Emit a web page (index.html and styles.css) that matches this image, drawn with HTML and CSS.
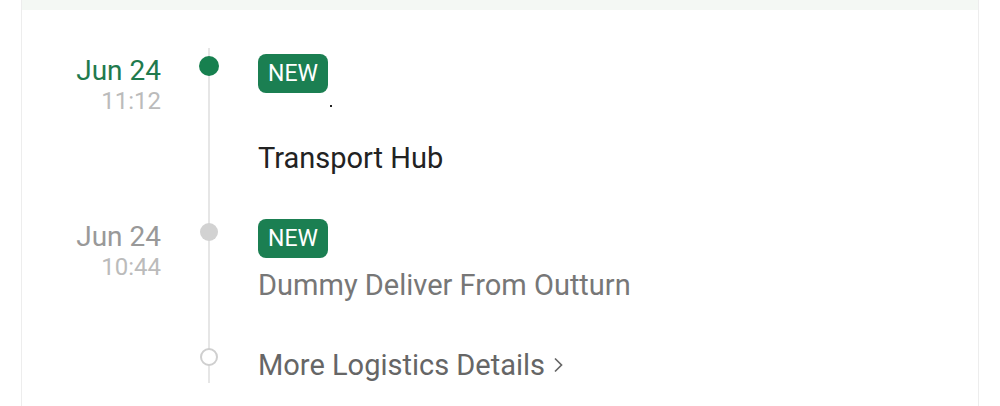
FILE: index.html
```html
<!DOCTYPE html>
<html lang="en">
<head>
    <meta charset="UTF-8">
    <title>Logistics</title>
    <link rel="stylesheet" href="styles.css">
</head>
<body>
    <div class="card">
        <div class="card-top"></div>
        <div class="timeline">
            <div class="row first">
                <div class="when">
                    <div class="date">Jun 24</div>
                    <div class="time">11:12</div>
                </div>
                <div class="axis"><span class="dot active"></span></div>
                <div class="what">
                    <span class="badge">NEW</span>
                    <div class="blank"><span class="speck"></span></div>
                    <div class="title dark">Transport Hub</div>
                </div>
            </div>
            <div class="row">
                <div class="when muted">
                    <div class="date">Jun 24</div>
                    <div class="time">10:44</div>
                </div>
                <div class="axis"><span class="dot"></span></div>
                <div class="what">
                    <span class="badge">NEW</span>
                    <div class="title">Dummy Deliver From Outturn</div>
                </div>
            </div>
            <div class="row last">
                <div class="when"></div>
                <div class="axis"><span class="dot hollow"></span></div>
                <div class="what">
                    <a class="more" href="#">More Logistics Details
                        <svg width="13" height="20" viewBox="0 0 13 20"><polyline points="3,3.5 9.5,10 3,16.5" fill="none" stroke="#666" stroke-width="1.7"/></svg>
                    </a>
                </div>
            </div>
        </div>
    </div>
</body>
</html>
```

FILE: styles.css
```css
body {
    margin: 0;
    font-family: Roboto, "Noto Sans", Arial, sans-serif;
    background: #fff;
}

.card {
    margin: 0 21px;
    border-left: 1px solid #ededed;
    border-right: 1px solid #ededed;
    padding-bottom: 40px;
}

.card-top {
    height: 10px;
    background: #f4f8f4;
}

.timeline {
    padding-top: 38px;
}

.row {
    display: grid;
    grid-template-columns: 139px 96px 1fr;
}

.when {
    text-align: right;
    padding-top: 7px;
}

.row + .row .when {
    padding-top: 8px;
}

.date {
    font-size: 28px;
    line-height: 32px;
    color: #1f7a4d;
}

.time {
    font-size: 24px;
    line-height: 28px;
    color: #bbb;
}

.muted .date {
    color: #999;
}

.axis {
    display: flex;
    justify-content: center;
    align-items: flex-start;
    background: linear-gradient(#e6e6e6, #e6e6e6) no-repeat center / 2px 100%;
}

.dot {
    width: 18px;
    height: 18px;
    border-radius: 50%;
    margin-top: 10px;
    background: #d2d2d2;
}

.dot.active {
    width: 20px;
    height: 20px;
    margin-top: 8px;
    background: #17804f;
}

.dot.hollow {
    box-sizing: border-box;
    background: #fff;
    border: 2px solid #cfcfcf;
    margin-top: 9px;
}

.what {
    padding: 6px 0 36px 1px;
}

.first .what {
    padding-bottom: 37px;
}

.last .what {
    padding: 8px 0 0 1px;
}

.badge {
    display: inline-block;
    background: #1b7f52;
    color: #fff;
    font-size: 23px;
    line-height: 27px;
    padding: 6px 10px;
    border-radius: 8px;
}

.blank {
    height: 47px;
    position: relative;
}

.speck {
    position: absolute;
    left: 72px;
    top: 12px;
    width: 2px;
    height: 2px;
    background: #222;
}

.title {
    font-size: 29px;
    line-height: 36px;
    color: #777;
    margin-top: 9px;
}

.title.dark {
    color: #222;
    margin-top: 0;
}

.more {
    font-size: 29px;
    line-height: 36px;
    color: #666;
    text-decoration: none;
    display: inline-flex;
    align-items: center;
    gap: 7px;
}
```
